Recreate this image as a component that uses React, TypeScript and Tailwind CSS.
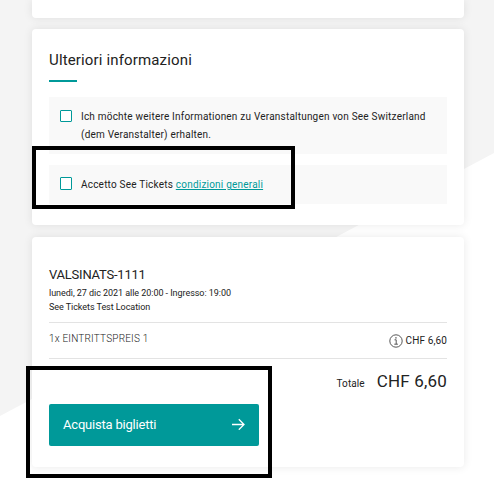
import type { ReactNode } from 'react';

interface CardProps {
  className?: string;
  children?: ReactNode;
}

function Card({ className = '', children }: CardProps) {
  return (
    <section
      className={`rounded-[4px] bg-white px-[17px] shadow-[0_0_10px_rgba(0,0,0,0.09)] ${className}`}
    >
      {children}
    </section>
  );
}

interface ConsentProps {
  className?: string;
  boxClassName?: string;
  children: ReactNode;
}

function Consent({ className = '', boxClassName = 'h-3', children }: ConsentProps) {
  return (
    <label className={`flex items-start bg-[#f9f9f9] pl-[11px] ${className}`}>
      <span className={`mr-[9px] w-3 shrink-0 rounded-[1px] border border-[#009999] bg-white ${boxClassName}`} />
      <span className="-mt-[2px] text-[10px] leading-[18px] tracking-[0.21px] whitespace-nowrap">
        {children}
      </span>
    </label>
  );
}

function InfoIcon() {
  return (
    <svg className="h-[14px] w-[14px]" viewBox="0 0 14 14" fill="none" stroke="#444" strokeWidth="0.9">
      <circle cx="7" cy="7" r="6.2" />
      <path d="M5.5 5.8h1.7v4.3M5.3 10.2h3.6" />
      <path d="M6.3 3.8h1.3" strokeWidth="1.2" />
    </svg>
  );
}

function ArrowIcon() {
  return (
    <svg className="-mt-[3px] h-3 w-[14px]" viewBox="0 0 14 12" fill="none" stroke="white" strokeWidth="1.3">
      <path d="M1 6.5h12M7.8 1.3L13 6.5L7.8 11.7" />
    </svg>
  );
}

export default function App() {
  return (
    <main className="relative h-[480px] w-[494px] overflow-hidden bg-white font-['Roboto',sans-serif] text-[#222]">
      {/* Slanted page background */}
      <div className="absolute inset-0 bg-[#f4f4f4] [clip-path:polygon(0_0,494px_0,494px_153px,0_416px)]" />

      <div className="relative ml-8 flex w-[432px] flex-col">
        <Card className="h-[18px] rounded-t-none" />

        <Card className="mt-[11px] h-[196px] pt-5">
          <h2 className="h-[31px] text-[15px] leading-[22px] tracking-[0.15px] whitespace-nowrap">
            Ulteriori informazioni
          </h2>
          <div className="h-0.5 w-7 bg-[#009999]" />
          <Consent className="mt-[15px] h-[57px] pt-[13px]">
            Ich möchte weitere Informationen zu Veranstaltungen von See Switzerland
            <br />
            (dem Veranstalter) erhalten.
          </Consent>
          <Consent className="mt-[11px] h-[39px] pt-3" boxClassName="mb-px h-[13px] [&+span]:-mt-px">
            Accetto See Tickets{' '}
            <a href="#" className="text-[#009999] underline">
              condizioni generali
            </a>
          </Consent>
        </Card>

        <Card className="mt-3 h-[230px] pt-7">
          <h3 className="text-[13px] leading-5 tracking-[-0.22px] whitespace-nowrap">VALSINATS-1111</h3>
          <div className="h-[37px] pt-px text-[9px] leading-[14px] tracking-[-0.05px] whitespace-nowrap">
            <p>lunedì, 27 dic 2021 alle 20:00 - Ingresso: 19:00</p>
            <p>See Tickets Test Location</p>
          </div>
          <div className="flex h-9 items-center justify-between border-t border-[#e3e3e3] text-[10px]">
            <span className="-mt-1 font-light tracking-[0.2px]">1x EINTRITTSPREIS 1</span>
            <span className="flex items-center gap-[3px] tracking-[0.12px]">
              <InfoIcon />
              CHF 6,60
            </span>
          </div>
          <div className="flex h-[46px] items-baseline justify-end gap-3 border-t border-[#e3e3e3] pt-3">
            <span className="text-[10px] tracking-[0.1px]">Totale</span>
            <span className="text-[17px] leading-5 tracking-[0.18px]">CHF 6,60</span>
          </div>
          <button className="flex h-[42px] w-[210px] items-center justify-between rounded-[2px] bg-[#009999] pr-[14px] pl-[14px] text-[13px] tracking-[-0.2px] text-white">
            Acquista biglietti
            <ArrowIcon />
          </button>
        </Card>
      </div>

      {/* Highlight frames */}
      <div className="absolute top-[146px] left-8 h-[63px] w-[263px] border-4 border-black" />
      <div className="absolute top-[366px] left-[26px] h-[112px] w-[246px] border-4 border-black" />
    </main>
  );
}
